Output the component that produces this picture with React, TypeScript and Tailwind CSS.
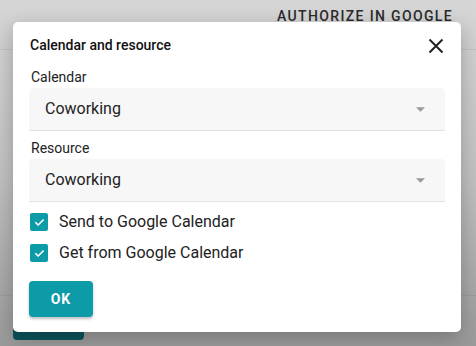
import React from "react";

function Check() {
  return (
    <span className="flex h-[18px] w-[18px] items-center justify-center rounded-[2px] bg-[#0d9ba8]">
      <svg width="11" height="11" viewBox="0 0 24 24" fill="none">
        <path d="M4 12.5l5 5L20 6.5" stroke="#fff" strokeWidth="3.6" strokeLinecap="round" strokeLinejoin="round" />
      </svg>
    </span>
  );
}

function Select({ value }: { value: string }) {
  return (
    <div className="flex h-[43px] items-center justify-between rounded-t-[4px] border-b border-[#e2e2e2] bg-[#f7f7f7] pl-4 pr-5">
      <span className="text-[16px] text-[#222]">{value}</span>
      <svg width="9" height="5" viewBox="0 0 10 5">
        <path d="M0 0h10L5 5z" fill="#9a9a9a" />
      </svg>
    </div>
  );
}

export default function App() {
  return (
    <div
      className="relative h-[346px] w-[476px] overflow-hidden bg-gradient-to-b from-[#d6d6d6] via-[#c2c2c2] to-[#9a9a9a]"
      style={{ fontFamily: "Roboto, 'Liberation Sans', sans-serif" }}
    >
      <div className="flex h-[50px] items-start justify-end border-b border-[#c4c4c4] pr-[23px] pt-[6px]">
        <span className="text-[14px] font-medium uppercase tracking-[1.35px] text-[#2b2b2b]">Authorize in Google</span>
      </div>
      <div className="absolute left-0 top-[295px] h-px w-full bg-black/[0.06]" />
      <div className="absolute left-[13px] top-[320px] h-[20px] w-[71px] rounded-[4px] bg-[#0a555c]" />
      <div className="absolute left-[13px] top-[22px] flex h-[310px] w-[448px] flex-col rounded-[5px] bg-white px-4 pt-[13px] shadow-[0_6px_20px_rgba(0,0,0,0.25)]">
        <div className="flex items-center justify-between">
          <span className="pl-[1px] text-[14px] font-medium text-[#111]">Calendar and resource</span>
          <svg width="16" height="16" viewBox="0 0 16 16" className="mr-[1px]">
            <path d="M1.5 1.5l13 13M14.5 1.5l-13 13" stroke="#222" strokeWidth="2" />
          </svg>
        </div>
        <div className="mt-[11px] pl-[2px] text-[14px] leading-[20px] text-[#222]">Calendar</div>
        <div className="mt-[1px]">
          <Select value="Coworking" />
        </div>
        <div className="mt-[7px] pl-[2px] text-[14px] leading-[20px] text-[#222]">Resource</div>
        <div className="mt-[1px]">
          <Select value="Coworking" />
        </div>
        <div className="mt-[10px] flex items-center gap-[11px] pl-[1px]">
          <Check />
          <span className="text-[16px] leading-[20px] text-[#222]">Send to Google Calendar</span>
        </div>
        <div className="mt-[11px] flex items-center gap-[11px] pl-[1px]">
          <Check />
          <span className="text-[16px] leading-[20px] text-[#222]">Get from Google Calendar</span>
        </div>
        <div className="mt-[18px]">
          <button className="h-[36px] w-[64px] rounded-[4px] bg-[#0d9ba8] text-[14px] font-bold tracking-[1px] text-white shadow-[0_2px_3px_rgba(0,0,0,0.25)]">
            OK
          </button>
        </div>
      </div>
    </div>
  );
}
